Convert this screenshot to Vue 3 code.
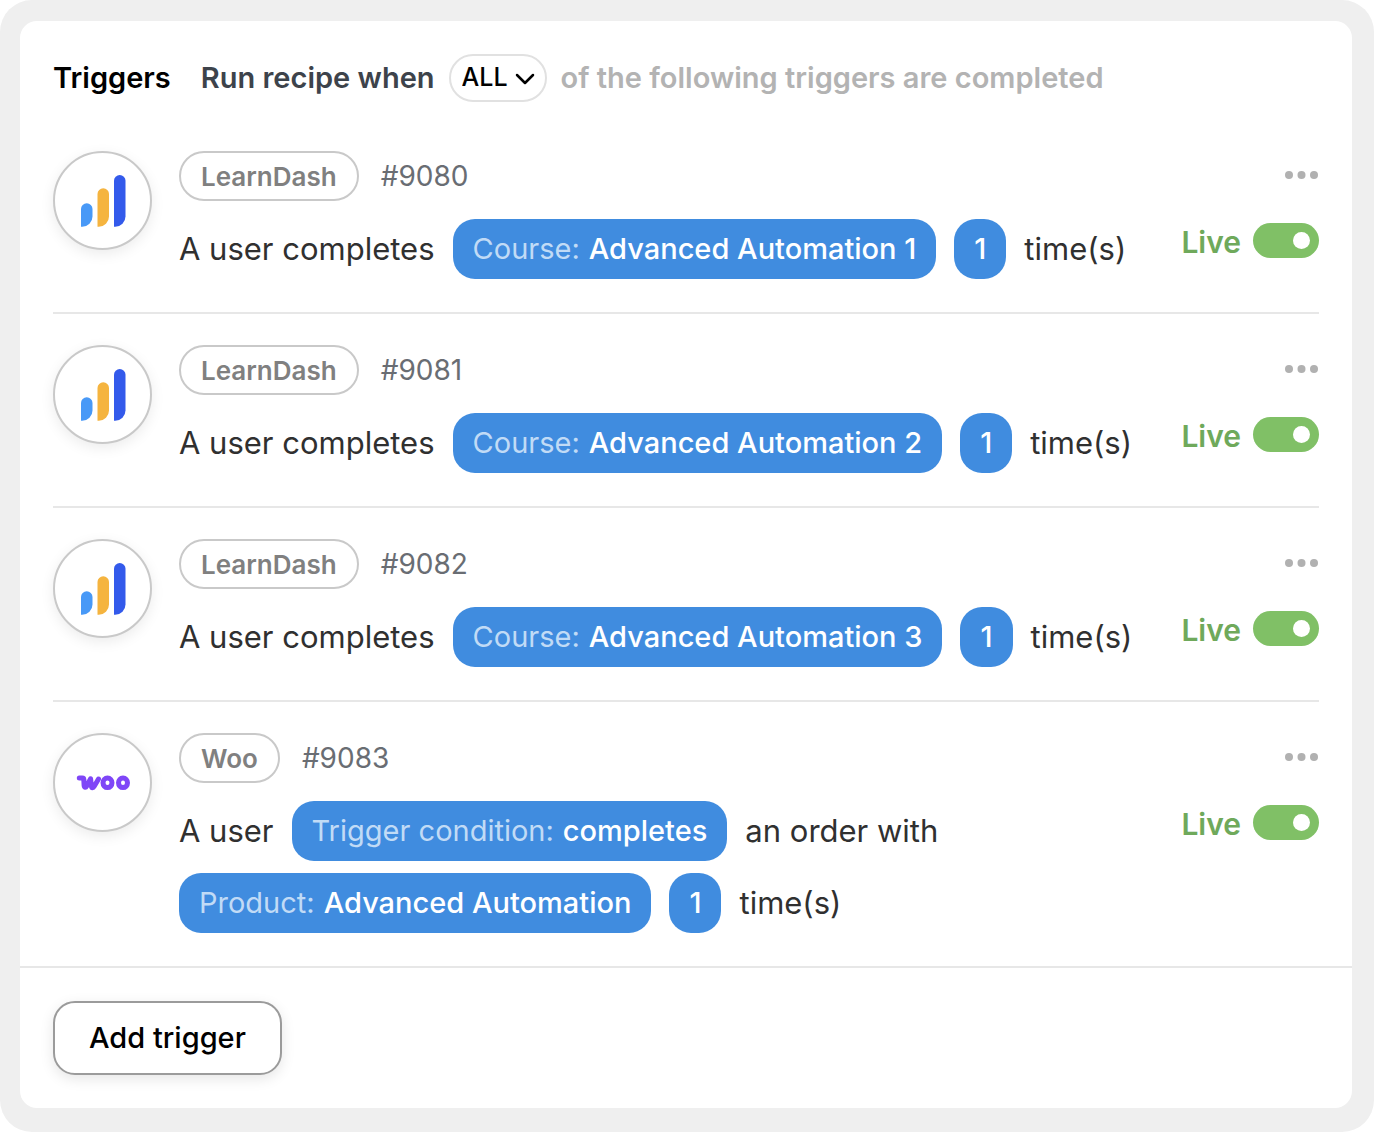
<script setup>
import { ref, reactive } from 'vue'

const mode = ref('ALL')

const course = (id, title) => ({
  id,
  integration: 'LearnDash',
  live: true,
  parts: [
    { text: 'A user completes' },
    { label: 'Course:', value: title },
    { value: '1' },
    { text: 'time(s)' },
  ],
})

const triggers = reactive([
  course(9080, 'Advanced Automation 1'),
  course(9081, 'Advanced Automation 2'),
  course(9082, 'Advanced Automation 3'),
  {
    id: 9083,
    integration: 'Woo',
    live: true,
    parts: [
      { text: 'A user' },
      { label: 'Trigger condition:', value: 'completes' },
      { text: 'an order with' },
      { label: 'Product:', value: 'Advanced Automation' },
      { value: '1' },
      { text: 'time(s)' },
    ],
  },
])
</script>

<template>
  <div class="frame">
    <main class="card">
      <header class="head">
        <h1 class="title">Triggers</h1>
        <div class="rule">
          <label class="rule-start" for="mode">Run recipe when</label>
          <span class="select">
            <select id="mode" v-model="mode">
              <option>ALL</option>
              <option>ANY</option>
            </select>
            <svg class="chevron" viewBox="0 0 20 12" aria-hidden="true">
              <path d="M2 2l8 8 8-8" />
            </svg>
          </span>
          <span class="rule-end">of the following triggers are completed</span>
        </div>
      </header>

      <ul class="list">
        <li v-for="t in triggers" :key="t.id" class="trigger">
          <span class="avatar">
            <svg v-if="t.integration === 'LearnDash'" class="bars" viewBox="0 0 46 52" aria-hidden="true">
              <path fill="#4899f7" d="M1 34a5.75 5.75 0 0 1 11.500 0v7.500a10.300 10.300 0 0 1-10.300 10.300H1z" />
              <path fill="#f5b43f" d="M17.500 19a5.750 5.750 0 0 1 11.500 0v22.500a10.300 10.300 0 0 1-10.300 10.300h-1.200z" />
              <path fill="#335aeb" d="M34 5.800a5.750 5.750 0 0 1 11.500 0v35.700a10.300 10.300 0 0 1-10.300 10.300H34z" />
            </svg>
            <svg v-else class="woo" viewBox="0 0 56 16" aria-hidden="true">
              <path d="M4.300 3h3c1 0 1.500.5 1.500 1.500l.3 5.900c.1 2.200 1.700 2.300 2.600.6l3.900-7.200.8 7.400c.2 2 1.800 2 2.800.2l4.300-7.400" />
              <ellipse cx="32.500" cy="7.800" rx="4.500" ry="4.800" />
              <ellipse cx="48" cy="7.800" rx="4.500" ry="4.800" />
            </svg>
          </span>

          <div class="body">
            <div class="meta">
              <span class="integration">{{ t.integration }}</span>
              <span class="number">#{{ t.id }}</span>
            </div>
            <div class="sentence">
              <template v-for="(p, i) in t.parts" :key="i">
                <span v-if="p.text" class="words">{{ p.text }}</span>
                <button v-else type="button" class="token">
                  <span v-if="p.label" class="token-label">{{ p.label }}</span>
                  <span>{{ p.value }}</span>
                </button>
              </template>
            </div>
          </div>

          <div class="side">
            <button type="button" class="more" aria-label="More options">
              <svg viewBox="0 0 34 10" aria-hidden="true">
                <circle cx="4" cy="4" r="4" />
                <circle cx="16.500" cy="4" r="4" />
                <circle cx="29" cy="4" r="4" />
              </svg>
            </button>
            <label class="status">
              <span class="status-text">Live</span>
              <input v-model="t.live" type="checkbox" class="toggle" />
            </label>
          </div>
        </li>
      </ul>

      <footer class="foot">
        <button type="button" class="add">Add trigger</button>
      </footer>
    </main>
  </div>
</template>

<style>
body {
  background: #fff;
}
</style>

<style scoped>
* {
  box-sizing: border-box;
}

.frame {
  padding: 21px 22px 24px 20px;
  border-radius: 32px;
  background: #efefef;
  font-family: Inter, "Open Sans", sans-serif;
  color: #303030;
}

.frame button,
.frame select {
  font-family: inherit;
  cursor: pointer;
}

.card {
  border-radius: 17px;
  background: #fff;
}

.head {
  display: flex;
  align-items: center;
  gap: 30px;
  padding: 33px 33px 18px;
  font-size: 29px;
  font-weight: 600;
}

.title,
.rule-start,
.rule-end {
  padding-bottom: 2px;
}

.title {
  margin: 0;
  font-size: inherit;
  font-weight: 600;
  color: #000;
}

.rule {
  display: flex;
  align-items: center;
  gap: 14px;
}

.rule-start {
  color: #3d434b;
}

.rule-end {
  color: #b3b3b3;
}

.select {
  position: relative;
  display: flex;
}

.select select {
  width: 98px;
  height: 48px;
  padding: 0 0 2px 11px;
  appearance: none;
  border: 2px solid #e1e1e1;
  border-radius: 24px;
  background: #fff;
  color: #000;
  font-size: 25px;
  font-weight: 500;
}

.chevron {
  position: absolute;
  top: 19px;
  right: 12px;
  width: 20px;
  height: 12px;
  pointer-events: none;
  fill: none;
  stroke: #000;
  stroke-width: 2.5;
  stroke-linecap: round;
  stroke-linejoin: round;
}

.list {
  margin: 0;
  padding: 0 33px;
  list-style: none;
}

.trigger {
  display: grid;
  grid-template-columns: 99px 1fr auto;
  gap: 27px;
  padding: 31px 0 33px;
}

.trigger + .trigger {
  border-top: 2px solid #e7e7e7;
}

.avatar {
  display: flex;
  align-items: center;
  justify-content: center;
  width: 99px;
  height: 99px;
  border: 2px solid #c9c9c9;
  border-radius: 50%;
  background: #fff;
  box-shadow: 0 4px 14px rgba(0, 0, 0, 0.08);
}

.bars {
  width: 46px;
  height: 52px;
}

.woo {
  width: 56px;
  height: 16px;
  fill: none;
  stroke: #7f46f7;
  stroke-width: 5;
  stroke-linecap: round;
  stroke-linejoin: round;
}

.body {
  display: flex;
  flex-direction: column;
  gap: 18px;
}

.meta {
  display: flex;
  align-items: center;
  gap: 22px;
}

.integration {
  height: 50px;
  padding: 0 20px;
  border: 2px solid #c9c9c9;
  border-radius: 25px;
  color: #808080;
  font-size: 26px;
  font-weight: 600;
  line-height: 48px;
}

.number {
  color: #696d73;
  font-size: 28px;
}

.sentence {
  display: flex;
  flex-wrap: wrap;
  align-items: center;
  gap: 12px 18px;
  font-size: 31px;
}

.words {
  padding-bottom: 2px;
}

.token {
  display: flex;
  align-items: center;
  gap: 9px;
  height: 60px;
  padding: 0 20px 2px;
  border: 0;
  border-radius: 22px;
  background: #408cdf;
  color: #fff;
  font-size: 29px;
  font-weight: 500;
}

.token-label {
  color: #c1dbf6;
  font-weight: 400;
}

.side {
  display: flex;
  flex-direction: column;
  align-items: flex-end;
  gap: 22px;
}

.more {
  display: flex;
  align-items: center;
  height: 50px;
  padding: 0;
  border: 0;
  background: none;
}

.more svg {
  width: 34px;
  height: 10px;
  fill: #b1b1b1;
}

.status {
  display: flex;
  align-items: center;
  gap: 12px;
  height: 35px;
  color: #6fa95b;
  font-size: 30px;
  font-weight: 600;
}

.status-text {
  padding-top: 2px;
}

.toggle {
  display: flex;
  align-items: center;
  width: 66px;
  height: 35px;
  margin: 0;
  padding: 0 9px;
  appearance: none;
  border-radius: 18px;
  background: #c4c4c4;
  cursor: pointer;
}

.toggle::before {
  content: "";
  width: 17px;
  height: 17px;
  border-radius: 50%;
  background: #fff;
}

.toggle:checked {
  justify-content: flex-end;
  background: #80c066;
}

.foot {
  padding: 33px;
  border-top: 2px solid #e7e7e7;
}

.add {
  height: 74px;
  padding: 0 34px 2px;
  border: 2px solid #9b9b9b;
  border-radius: 22px;
  background: #fff;
  box-shadow: 0 4px 14px rgba(0, 0, 0, 0.1);
  color: #000;
  font-size: 29px;
  font-weight: 500;
}
</style>
